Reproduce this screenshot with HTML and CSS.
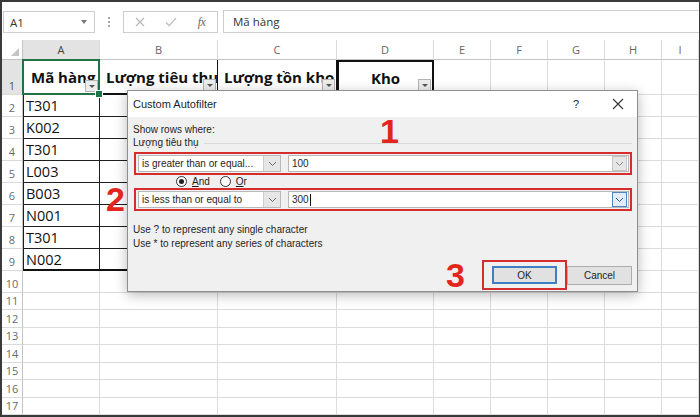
FILE: index.html
```html
<!DOCTYPE html>
<html lang="vi">
<head>
<meta charset="utf-8">
<title>Custom Autofilter</title>
<link rel="stylesheet" href="styles.css">
</head>
<body>
<div class="frame">
  <div class="fbar">
    <div class="namebox"><span>A1</span><i class="tri"></i></div>
    <div class="dots"><b></b><b></b><b></b></div>
    <div class="fxbox">
      <span class="ic"><svg width="10" height="10" viewBox="0 0 10 10"><path d="M1 1 L9 9 M9 1 L1 9" stroke="#b9b9b9" stroke-width="1.2" fill="none"/></svg></span>
      <span class="ic"><svg width="12" height="10" viewBox="0 0 12 10"><path d="M1 5.5 L4.2 8.6 L11 1.2" stroke="#b9b9b9" stroke-width="1.2" fill="none"/></svg></span>
      <span class="ic fx">fx</span>
    </div>
    <div class="formula">Mã hàng</div>
  </div>

  <div class="sheet">
    <div class="corner"><svg width="8" height="8" viewBox="0 0 8 8"><polygon points="8,0 8,8 0,8" fill="#c4c4c4"/></svg></div>
    <div class="ch csel">A</div><div class="ch">B</div><div class="ch">C</div><div class="ch">D</div><div class="ch">E</div><div class="ch">F</div><div class="ch">G</div><div class="ch">H</div><div class="ch">I</div>

    <div class="rh rsel">1</div>
    <div class="th a1"><span class="tx">Mã hàng</span><span class="fb"></span></div>
    <div class="th hb"><span class="tx">Lượng tiêu thụ</span><span class="fb"></span></div>
    <div class="th hb"><span class="tx">Lượng tồn kho</span><span class="fb"></span></div>
    <div class="th kho"><span class="tx">Kho</span><span class="fb"></span></div>
    <div class="c"></div><div class="c"></div><div class="c"></div><div class="c"></div><div class="c"></div>

    <div class="rh">2</div><div class="td ca">T301</div><div class="td"></div><div class="td"></div><div class="td"></div>
    <div class="c"></div><div class="c"></div><div class="c"></div><div class="c"></div><div class="c"></div>
    <div class="rh">3</div><div class="td ca">K002</div><div class="td"></div><div class="td"></div><div class="td"></div>
    <div class="c"></div><div class="c"></div><div class="c"></div><div class="c"></div><div class="c"></div>
    <div class="rh">4</div><div class="td ca">T301</div><div class="td"></div><div class="td"></div><div class="td"></div>
    <div class="c"></div><div class="c"></div><div class="c"></div><div class="c"></div><div class="c"></div>
    <div class="rh">5</div><div class="td ca">L003</div><div class="td"></div><div class="td"></div><div class="td"></div>
    <div class="c"></div><div class="c"></div><div class="c"></div><div class="c"></div><div class="c"></div>
    <div class="rh">6</div><div class="td ca">B003</div><div class="td"></div><div class="td"></div><div class="td"></div>
    <div class="c"></div><div class="c"></div><div class="c"></div><div class="c"></div><div class="c"></div>
    <div class="rh">7</div><div class="td ca">N001</div><div class="td"></div><div class="td"></div><div class="td"></div>
    <div class="c"></div><div class="c"></div><div class="c"></div><div class="c"></div><div class="c"></div>
    <div class="rh">8</div><div class="td ca">T301</div><div class="td"></div><div class="td"></div><div class="td"></div>
    <div class="c"></div><div class="c"></div><div class="c"></div><div class="c"></div><div class="c"></div>
    <div class="rh">9</div><div class="td ca last">N002</div><div class="td last"></div><div class="td last"></div><div class="td last"></div>
    <div class="c"></div><div class="c"></div><div class="c"></div><div class="c"></div><div class="c"></div>

    <div class="rh">10</div><div class="c"></div><div class="c"></div><div class="c"></div><div class="c"></div><div class="c"></div><div class="c"></div><div class="c"></div><div class="c"></div><div class="c"></div>
    <div class="rh">11</div><div class="c"></div><div class="c"></div><div class="c"></div><div class="c"></div><div class="c"></div><div class="c"></div><div class="c"></div><div class="c"></div><div class="c"></div>
    <div class="rh">12</div><div class="c"></div><div class="c"></div><div class="c"></div><div class="c"></div><div class="c"></div><div class="c"></div><div class="c"></div><div class="c"></div><div class="c"></div>
    <div class="rh">13</div><div class="c"></div><div class="c"></div><div class="c"></div><div class="c"></div><div class="c"></div><div class="c"></div><div class="c"></div><div class="c"></div><div class="c"></div>
    <div class="rh">14</div><div class="c"></div><div class="c"></div><div class="c"></div><div class="c"></div><div class="c"></div><div class="c"></div><div class="c"></div><div class="c"></div><div class="c"></div>
    <div class="rh">15</div><div class="c"></div><div class="c"></div><div class="c"></div><div class="c"></div><div class="c"></div><div class="c"></div><div class="c"></div><div class="c"></div><div class="c"></div>
    <div class="rh">16</div><div class="c"></div><div class="c"></div><div class="c"></div><div class="c"></div><div class="c"></div><div class="c"></div><div class="c"></div><div class="c"></div><div class="c"></div>
    <div class="rh">17</div><div class="c"></div><div class="c"></div><div class="c"></div><div class="c"></div><div class="c"></div><div class="c"></div><div class="c"></div><div class="c"></div><div class="c"></div>
  </div>

  <div class="dialog">
    <div class="dtitle">
      <span class="dname">Custom Autofilter</span>
      <span class="help">?</span>
      <span class="close"><svg width="12" height="12" viewBox="0 0 12 12"><path d="M1 1 L11 11 M11 1 L1 11" stroke="#333" stroke-width="1.1" fill="none"/></svg></span>
    </div>
    <div class="dbody">
      <div class="lbl">Show rows where:</div>
      <div class="grp">Lượng tiêu thụ</div>
      <div class="rrow">
        <div class="combo"><span class="ctext">is greater than or equal...</span><span class="cbtn"><svg width="9" height="6" viewBox="0 0 9 6"><polyline points="1,1 4.5,4.5 8,1" fill="none" stroke="#666" stroke-width="1"/></svg></span></div>
        <div class="val"><span class="vtext">100</span><span class="vbtn"><svg width="9" height="6" viewBox="0 0 9 6"><polyline points="1,1 4.5,4.5 8,1" fill="none" stroke="#888" stroke-width="1"/></svg></span></div>
      </div>
      <div class="radios">
        <span class="radio on"></span><span class="rlab"><u>A</u>nd</span>
        <span class="radio"></span><span class="rlab"><u>O</u>r</span>
      </div>
      <div class="rrow">
        <div class="combo"><span class="ctext">is less than or equal to</span><span class="cbtn"><svg width="9" height="6" viewBox="0 0 9 6"><polyline points="1,1 4.5,4.5 8,1" fill="none" stroke="#666" stroke-width="1"/></svg></span></div>
        <div class="val focus"><span class="vtext">300<span class="caret"></span></span><span class="vbtn"><svg width="9" height="6" viewBox="0 0 9 6"><polyline points="1,1 4.5,4.5 8,1" fill="none" stroke="#2c5f94" stroke-width="1"/></svg></span></div>
      </div>
      <div class="hints">
        <div>Use ? to represent any single character</div>
        <div>Use * to represent any series of characters</div>
      </div>
      <div class="btns">
        <div class="okwrap"><div class="btn ok">OK</div></div>
        <div class="btn">Cancel</div>
      </div>
    </div>
  </div>

  <div class="num n1">1</div>
  <div class="num n2">2</div>
  <div class="num n3">3</div>
</div>
</body>
</html>
```
FILE: styles.css
```css
* { box-sizing: border-box; }
html, body { margin: 0; padding: 0; }
body {
  width: 700px;
  height: 417px;
  overflow: hidden;
  background: #fff;
  font-family: "Open Sans", "Noto Sans", sans-serif;
}
.frame {
  position: relative;
  width: 700px;
  height: 417px;
  border: 2px solid #3a3a3a;
  border-right-width: 1px;
  display: flex;
  flex-direction: column;
  background: #fff;
}

/* formula bar */
.fbar {
  height: 38px;
  flex: none;
  display: flex;
  align-items: flex-end;
  padding: 0 0 7px 1px;
}
.namebox {
  width: 92px;
  height: 22px;
  border: 1px solid #cdcdcd;
  display: flex;
  align-items: center;
  padding: 0 7px 0 6px;
  font-size: 11.5px;
  color: #333;
}
.tri {
  margin-left: auto;
  width: 0;
  height: 0;
  border-left: 3.5px solid transparent;
  border-right: 3.5px solid transparent;
  border-top: 4px solid #777;
}
.dots {
  width: 28px;
  height: 22px;
  display: flex;
  flex-direction: column;
  align-items: center;
  justify-content: center;
  gap: 2px;
}
.dots b {
  width: 2px;
  height: 2px;
  background: #a8a8a8;
  display: block;
}
.fxbox {
  width: 95px;
  height: 22px;
  border: 1px solid #cdcdcd;
  display: flex;
  align-items: center;
}
.ic {
  width: 31px;
  display: flex;
  justify-content: center;
  align-items: center;
}
.fx {
  font-family: "Liberation Serif", serif;
  font-style: italic;
  font-size: 12px;
  color: #666;
  letter-spacing: -0.5px;
}
.formula {
  flex: 1;
  margin-left: 5px;
  height: 23px;
  border: 1px solid #cdcdcd;
  border-right: none;
  display: flex;
  align-items: center;
  padding-left: 9px;
  font-size: 11.5px;
  color: #333;
}

/* sheet grid */
.sheet {
  flex: 1;
  display: grid;
  grid-template-columns: 21px 77px 118px 119px 97px 57px 57px 57px 57px 1fr;
  grid-template-rows: 20px 35px repeat(9, 22px) repeat(7, 1fr);
}
.corner {
  border-right: 1px solid #c4c4c4;
  border-bottom: 1px solid #c4c4c4;
  display: flex;
  justify-content: flex-end;
  align-items: flex-end;
  padding: 0 3px 3px 0;
}
.ch {
  border-right: 1px solid #dadada;
  border-bottom: 1px solid #c4c4c4;
  display: flex;
  align-items: center;
  justify-content: center;
  font-size: 11px;
  color: #666;
}
.csel {
  background: #e3e3e3;
  color: #444;
  border-bottom-color: #217346;
}
.rh {
  border-right: 1px solid #c4c4c4;
  border-bottom: 1px solid #dadada;
  display: flex;
  align-items: flex-end;
  justify-content: center;
  padding-bottom: 1px;
  font-size: 11px;
  line-height: 15px;
  color: #6a6a6a;
}
.rsel {
  background: #e3e3e3;
  color: #555;
}
.c {
  border-right: 1px solid #dcdcdc;
  border-bottom: 1px solid #dcdcdc;
}

/* table header cells */
.th {
  position: relative;
  display: flex;
  align-items: center;
  padding-left: 8px;
  font-weight: 700;
  font-size: 15px;
  color: #111;
  white-space: nowrap;
  border-right: 1px solid #dcdcdc;
  border-bottom: 1px solid #dcdcdc;
}
.th .tx {
  overflow: hidden;
  width: 100%;
}
.hb {
  padding-left: 6px;
  border-right: 1px solid #111;
  border-bottom: 2px solid #111;
}
.kho {
  border: 2px solid #111;
  justify-content: center;
  padding-left: 0;
}
.kho .tx {
  width: auto;
}
.a1 {
  z-index: 2;
}
.a1::before {
  content: "";
  position: absolute;
  left: -1px;
  top: -1px;
  right: -1px;
  bottom: -1px;
  border: 2px solid #217346;
}
.a1::after {
  content: "";
  position: absolute;
  right: -4px;
  bottom: -4px;
  width: 6px;
  height: 6px;
  background: #217346;
  border: 1px solid #fff;
}
.fb {
  position: absolute;
  right: 1px;
  bottom: 2px;
  width: 13px;
  height: 12px;
  background: #ededed;
  border: 1px solid #b4b4b4;
}
.fb::after {
  content: "";
  position: absolute;
  left: 3px;
  top: 4px;
  border-left: 3px solid transparent;
  border-right: 3px solid transparent;
  border-top: 3px solid #555;
}

/* table data cells */
.td {
  display: flex;
  align-items: center;
  padding-left: 3px;
  font-size: 14.5px;
  color: #111;
  border-right: 1px solid #1e1e1e;
  border-bottom: 1px solid #1e1e1e;
}
.ca {
  box-shadow: inset 1px 0 0 #1e1e1e;
}
.td.last {
  border-bottom: 2px solid #111;
}

/* dialog */
.dialog {
  position: absolute;
  left: 125px;
  top: 88px;
  width: 511px;
  height: 202px;
  border: 1px solid #8f8f8f;
  background: #f0f0f0;
  box-shadow: 0 3px 12px rgba(0, 0, 0, 0.28);
  display: flex;
  flex-direction: column;
  overflow: hidden;
  font-family: "Liberation Sans", Arial, sans-serif;
  color: #1e1e1e;
}
.dtitle {
  height: 26px;
  flex: none;
  background: #fff;
  display: flex;
  align-items: center;
  padding: 0 7px 0 5px;
  font-size: 11px;
}
.help {
  margin-left: auto;
  width: 20px;
  text-align: center;
  font-size: 11px;
}
.close {
  width: 24px;
  margin-left: 20px;
  display: flex;
  justify-content: center;
}
.dbody {
  flex: 1;
  padding: 6px 5px 0 5px;
  font-size: 10px;
}
.lbl {
  height: 13px;
  line-height: 13px;
}
.grp {
  height: 14px;
  line-height: 14px;
  display: flex;
  align-items: center;
}
.grp::after {
  content: "";
  flex: 1;
  height: 1px;
  background: #d9d9d9;
  margin-left: 5px;
}
.rrow {
  margin-top: 2px;
  margin-left: 1px;
  height: 23px;
  border: 2px solid #d62c2c;
  display: flex;
  align-items: center;
  padding: 0 1px 0 2px;
  gap: 7px;
}
.rrow + .radios + .rrow {
  margin-top: 0;
}
.combo {
  width: 143px;
  height: 17px;
  background: #fff;
  border: 1px solid #b8b8b8;
  display: flex;
  align-items: center;
  padding-left: 3px;
}
.ctext {
  white-space: nowrap;
  flex: 1;
}
.cbtn {
  width: 17px;
  height: 15px;
  background: #e6e6e6;
  border-left: 1px solid #cdcdcd;
  display: flex;
  align-items: center;
  justify-content: center;
}
.val {
  flex: 1;
  height: 17px;
  background: #fff;
  border: 1px solid #b8b8b8;
  display: flex;
  align-items: center;
  padding: 0 1px 0 3px;
}
.vtext {
  flex: 1;
  display: flex;
  align-items: center;
}
.caret {
  display: inline-block;
  width: 1px;
  height: 12px;
  background: #111;
  margin-left: 1px;
}
.vbtn {
  width: 15px;
  height: 15px;
  background: #e6e6e6;
  border: 1px solid #c4c4c4;
  display: flex;
  align-items: center;
  justify-content: center;
}
.focus .vbtn {
  background: #e1ecf8;
  border-color: #4f86c2;
}
.radios {
  height: 13px;
  display: flex;
  align-items: center;
  padding-left: 43px;
}
.radio {
  width: 11px;
  height: 11px;
  border: 1px solid #333;
  border-radius: 50%;
  background: #fff;
  display: flex;
  align-items: center;
  justify-content: center;
  margin-right: 5px;
}
.radio.on::after {
  content: "";
  width: 5px;
  height: 5px;
  border-radius: 50%;
  background: #222;
}
.rlab {
  margin-right: 10px;
}
.hints {
  margin-top: 12px;
  line-height: 14px;
}
.btns {
  margin-top: 9px;
  display: flex;
  justify-content: flex-end;
  align-items: center;
}
.okwrap {
  border: 2px solid #d62c2c;
  padding: 4px 8px;
}
.btn {
  width: 65px;
  height: 19px;
  background: #e1e1e1;
  border: 1px solid #adadad;
  display: flex;
  align-items: center;
  justify-content: center;
  font-size: 10px;
}
.btn.ok {
  height: 18px;
  border: 2px solid #3f7fc1;
}

/* red step numbers */
.num {
  position: absolute;
  font-family: "Liberation Sans", Arial, sans-serif;
  font-weight: 700;
  font-size: 34px;
  line-height: 34px;
  color: #e2261d;
}
.n1 { left: 378px; top: 112px; }
.n2 { left: 104px; top: 180px; }
.n3 { left: 444px; top: 256px; }
```
